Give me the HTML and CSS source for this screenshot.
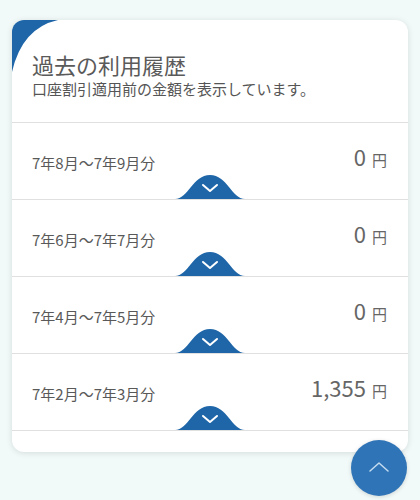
FILE: index.html
```html
<!DOCTYPE html>
<html lang="ja">
  <head>
    <meta charset="UTF-8" />
    <meta name="viewport" content="width=device-width, initial-scale=1.0" />
    <title>過去の利用履歴</title>
    <link rel="stylesheet" href="styles.css">
  </head>
  <body>
    <section class="card">
      <!-- 左上の飾り -->
      <svg class="corner" width="50" height="55" viewBox="0 0 50 55">
        <path d="M0 0 H46 Q10 8 0 52 Z" fill="#1f66a8" />
      </svg>

      <div class="card-head">
        <h1>過去の利用履歴</h1>
        <p>口座割引適用前の金額を表示しています。</p>
      </div>

      <ul class="history">
        <li class="row">
          <span class="period">7年8月〜7年9月分</span>
          <span class="amount">0<small>円</small></span>
          <button class="toggle" type="button" aria-label="詳細">
            <svg width="70" height="24" viewBox="0 0 70 24">
              <path d="M0 24 C13 24 18 0 35 0 C52 0 57 24 70 24 Z" fill="#1f66a8" />
              <path d="M28 10 L35 16 L42 10" fill="none" stroke="#fff" stroke-width="2" stroke-linecap="round" stroke-linejoin="round" />
            </svg>
          </button>
        </li>
        <li class="row">
          <span class="period">7年6月〜7年7月分</span>
          <span class="amount">0<small>円</small></span>
          <button class="toggle" type="button" aria-label="詳細">
            <svg width="70" height="24" viewBox="0 0 70 24">
              <path d="M0 24 C13 24 18 0 35 0 C52 0 57 24 70 24 Z" fill="#1f66a8" />
              <path d="M28 10 L35 16 L42 10" fill="none" stroke="#fff" stroke-width="2" stroke-linecap="round" stroke-linejoin="round" />
            </svg>
          </button>
        </li>
        <li class="row">
          <span class="period">7年4月〜7年5月分</span>
          <span class="amount">0<small>円</small></span>
          <button class="toggle" type="button" aria-label="詳細">
            <svg width="70" height="24" viewBox="0 0 70 24">
              <path d="M0 24 C13 24 18 0 35 0 C52 0 57 24 70 24 Z" fill="#1f66a8" />
              <path d="M28 10 L35 16 L42 10" fill="none" stroke="#fff" stroke-width="2" stroke-linecap="round" stroke-linejoin="round" />
            </svg>
          </button>
        </li>
        <li class="row">
          <span class="period">7年2月〜7年3月分</span>
          <span class="amount">1,355<small>円</small></span>
          <button class="toggle" type="button" aria-label="詳細">
            <svg width="70" height="24" viewBox="0 0 70 24">
              <path d="M0 24 C13 24 18 0 35 0 C52 0 57 24 70 24 Z" fill="#1f66a8" />
              <path d="M28 10 L35 16 L42 10" fill="none" stroke="#fff" stroke-width="2" stroke-linecap="round" stroke-linejoin="round" />
            </svg>
          </button>
        </li>
      </ul>
    </section>

    <!-- ページトップへ -->
    <button class="to-top" type="button" aria-label="ページトップへ">
      <svg width="22" height="12" viewBox="0 0 22 12">
        <path d="M2 11 L11 3 L20 11" fill="none" stroke="#c4dcf0" stroke-width="1.5" stroke-linecap="round" stroke-linejoin="round" />
      </svg>
    </button>
  </body>
</html>
```

FILE: styles.css
```css
body {
  margin: 0;
  padding: 20px 12px 0;
  height: 500px;
  box-sizing: border-box;
  background-color: #f1f9f9;
  font-family: "Noto Sans CJK JP", "Noto Sans", sans-serif;
  color: #595959;
  overflow: hidden;
}

.card {
  position: relative;
  background-color: #fff;
  border-radius: 12px;
  box-shadow: 0 1px 6px rgba(0, 0, 0, 0.12);
  padding-bottom: 21px;
  overflow: hidden;
}

.corner {
  position: absolute;
  top: 0;
  left: 0;
  display: block;
}

.card-head {
  height: 103px;
  padding: 0 20px;
  box-sizing: border-box;
  border-bottom: 1px solid #e0e0e0;
}

.card-head h1 {
  margin: 0;
  padding-top: 29px;
  font-size: 22px;
  font-weight: 400;
  line-height: 30px;
  color: #5a5a5a;
}

.card-head p {
  margin: 0;
  font-size: 15px;
  line-height: 20px;
  color: #555;
}

.history {
  list-style: none;
  margin: 0;
  padding: 0;
}

.row {
  position: relative;
  height: 76px;
  border-bottom: 1px solid #e0e0e0;
  display: flex;
  justify-content: space-between;
  align-items: flex-start;
  padding: 0 21px 0 20px;
}

.period {
  margin-top: 30px;
  font-size: 15px;
  line-height: 20px;
}

.amount {
  margin-top: 19px;
  font-size: 22px;
  line-height: 28px;
  color: #666;
}

.amount small {
  margin-left: 6px;
  font-size: 15px;
  color: #666;
}

.toggle {
  position: absolute;
  left: 50%;
  bottom: 0;
  margin-left: -35px;
  padding: 0;
  border: none;
  background: none;
  cursor: pointer;
  line-height: 0;
}

.to-top {
  position: fixed;
  left: 351px;
  top: 440px;
  width: 56px;
  height: 56px;
  border: none;
  border-radius: 50%;
  background-color: #2f74b6;
  box-shadow: 0 1px 4px rgba(0, 0, 0, 0.15);
  cursor: pointer;
  display: flex;
  align-items: center;
  justify-content: center;
  padding: 0 0 4px;
}
```
